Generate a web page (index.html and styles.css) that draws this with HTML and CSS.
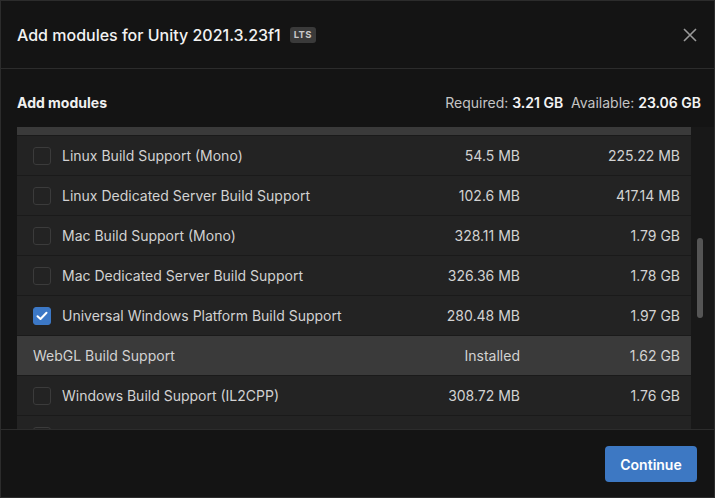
FILE: index.html
```html
<!DOCTYPE html>
<html>
<head>
<meta charset="utf-8">
<link rel="stylesheet" href="styles.css">
</head>
<body>
<div class="window">
  <header class="header">
    <h1 class="title">Add modules for Unity 2021.3.23f1 <span class="badge">LTS</span></h1>
    <button class="close" aria-label="Close">
      <svg width="14" height="14" viewBox="0 0 14 14"><path d="M1 1 L13 13 M13 1 L1 13" stroke="#9a9a9a" stroke-width="1.6" fill="none"/></svg>
    </button>
  </header>
  <div class="bar">
    <span class="bar-title">Add modules</span>
    <span class="space">Required: <b>3.21 GB</b>&nbsp;&nbsp;Available: <b>23.06 GB</b></span>
  </div>
  <div class="list-wrap">
    <div class="list">
      <div class="row installed cut"></div>
      <div class="row"><span class="cb"></span><span class="name">Linux Build Support (Mono)</span><span class="size">54.5 MB</span><span class="total">225.22 MB</span></div>
      <div class="row"><span class="cb"></span><span class="name">Linux Dedicated Server Build Support</span><span class="size">102.6 MB</span><span class="total">417.14 MB</span></div>
      <div class="row"><span class="cb"></span><span class="name">Mac Build Support (Mono)</span><span class="size">328.11 MB</span><span class="total">1.79 GB</span></div>
      <div class="row"><span class="cb"></span><span class="name">Mac Dedicated Server Build Support</span><span class="size">326.36 MB</span><span class="total">1.78 GB</span></div>
      <div class="row"><span class="cb checked"><svg width="12" height="10" viewBox="0 0 12 10"><path d="M1.5 5.2 L4.5 8 L10.5 1.8" stroke="#fff" stroke-width="2" fill="none" stroke-linecap="round" stroke-linejoin="round"/></svg></span><span class="name">Universal Windows Platform Build Support</span><span class="size">280.48 MB</span><span class="total">1.97 GB</span></div>
      <div class="row installed"><span class="name">WebGL Build Support</span><span class="size">Installed</span><span class="total">1.62 GB</span></div>
      <div class="row"><span class="cb"></span><span class="name">Windows Build Support (IL2CPP)</span><span class="size">308.72 MB</span><span class="total">1.76 GB</span></div>
      <div class="row"><span class="cb"></span></div>
    </div>
    <div class="gutter"><div class="thumb"></div></div>
  </div>
  <footer class="footer">
    <button class="continue">Continue</button>
  </footer>
</div>
</body>
</html>
```
FILE: styles.css
```css
* { box-sizing: border-box; }
html, body { margin: 0; padding: 0; background: #141414; }
body { font-family: Inter, "Noto Sans", sans-serif; color: #d2d2d2; }

.window {
  width: 715px;
  height: 498px;
  border: 1px solid #2c2c2c;
  background: #141414;
  display: flex;
  flex-direction: column;
  overflow: hidden;
}

.header {
  height: 68px;
  border-bottom: 1px solid #2c2c2c;
  display: flex;
  align-items: center;
  justify-content: space-between;
  padding: 0 17px 0 16px;
  flex: none;
}
.title {
  margin: 0;
  font-size: 16px;
  font-weight: 500;
  color: #f2f2f2;
  display: flex;
  align-items: center;
  gap: 9px;
}
.badge {
  display: inline-block;
  background: #3a3a3a;
  color: #c9c9c9;
  font-size: 9.5px;
  font-weight: 700;
  letter-spacing: 0.3px;
  padding: 2px 4px;
  border-radius: 3px;
  line-height: 12px;
}
.close {
  background: none;
  border: 0;
  padding: 0;
  width: 14px;
  height: 14px;
  display: flex;
  margin-top: 1px;
}

.bar {
  height: 58px;
  flex: none;
  display: flex;
  justify-content: space-between;
  align-items: flex-start;
  padding: 25px 13px 0 16px;
  font-size: 14px;
  line-height: 18px;
}
.bar-title { font-weight: 700; color: #f0f0f0; }
.space { color: #c4c4c4; }
.space b { color: #f4f4f4; font-weight: 600; }

.list-wrap {
  height: 302px;
  flex: none;
  display: flex;
  margin-left: 16px;
}
.list {
  width: 674px;
  overflow: hidden;
  background: #232323;
}
.row {
  height: 40px;
  border-bottom: 1px solid #1a1a1a;
  display: grid;
  grid-template-columns: 18px 1fr 120px 160px;
  column-gap: 0;
  align-items: center;
  padding: 0 11px 0 16px;
  font-size: 14px;
  color: #d2d2d2;
  background: #232323;
}
.row.cut { height: 9px; }
.row.installed { background: #3a3a3a; }
.row.installed .name { grid-column: 1 / 3; padding-left: 0; }
.cb {
  width: 18px;
  height: 18px;
  border: 1px solid #3b3b3b;
  border-radius: 3px;
  background: #232323;
  display: flex;
  align-items: center;
  justify-content: center;
}
.cb.checked { background: #3c78c6; border-color: #3c78c6; }
.name { padding-left: 11px; white-space: nowrap; }
.size, .total { text-align: right; white-space: nowrap; }

.gutter {
  width: 23px;
  background: #181818;
  padding: 111px 0 0 6px;
}
.thumb {
  width: 6px;
  height: 80px;
  border-radius: 3px;
  background: #555555;
}

.footer {
  flex: 1;
  border-top: 1px solid #2c2c2c;
  display: flex;
  justify-content: flex-end;
  align-items: flex-start;
  padding: 16px 17px 0 0;
}
.continue {
  width: 92px;
  height: 36px;
  background: #3d78c3;
  border: 0;
  border-radius: 4px;
  color: #ffffff;
  font-family: Inter, "Noto Sans", sans-serif;
  font-size: 14px;
  font-weight: 600;
}
```
